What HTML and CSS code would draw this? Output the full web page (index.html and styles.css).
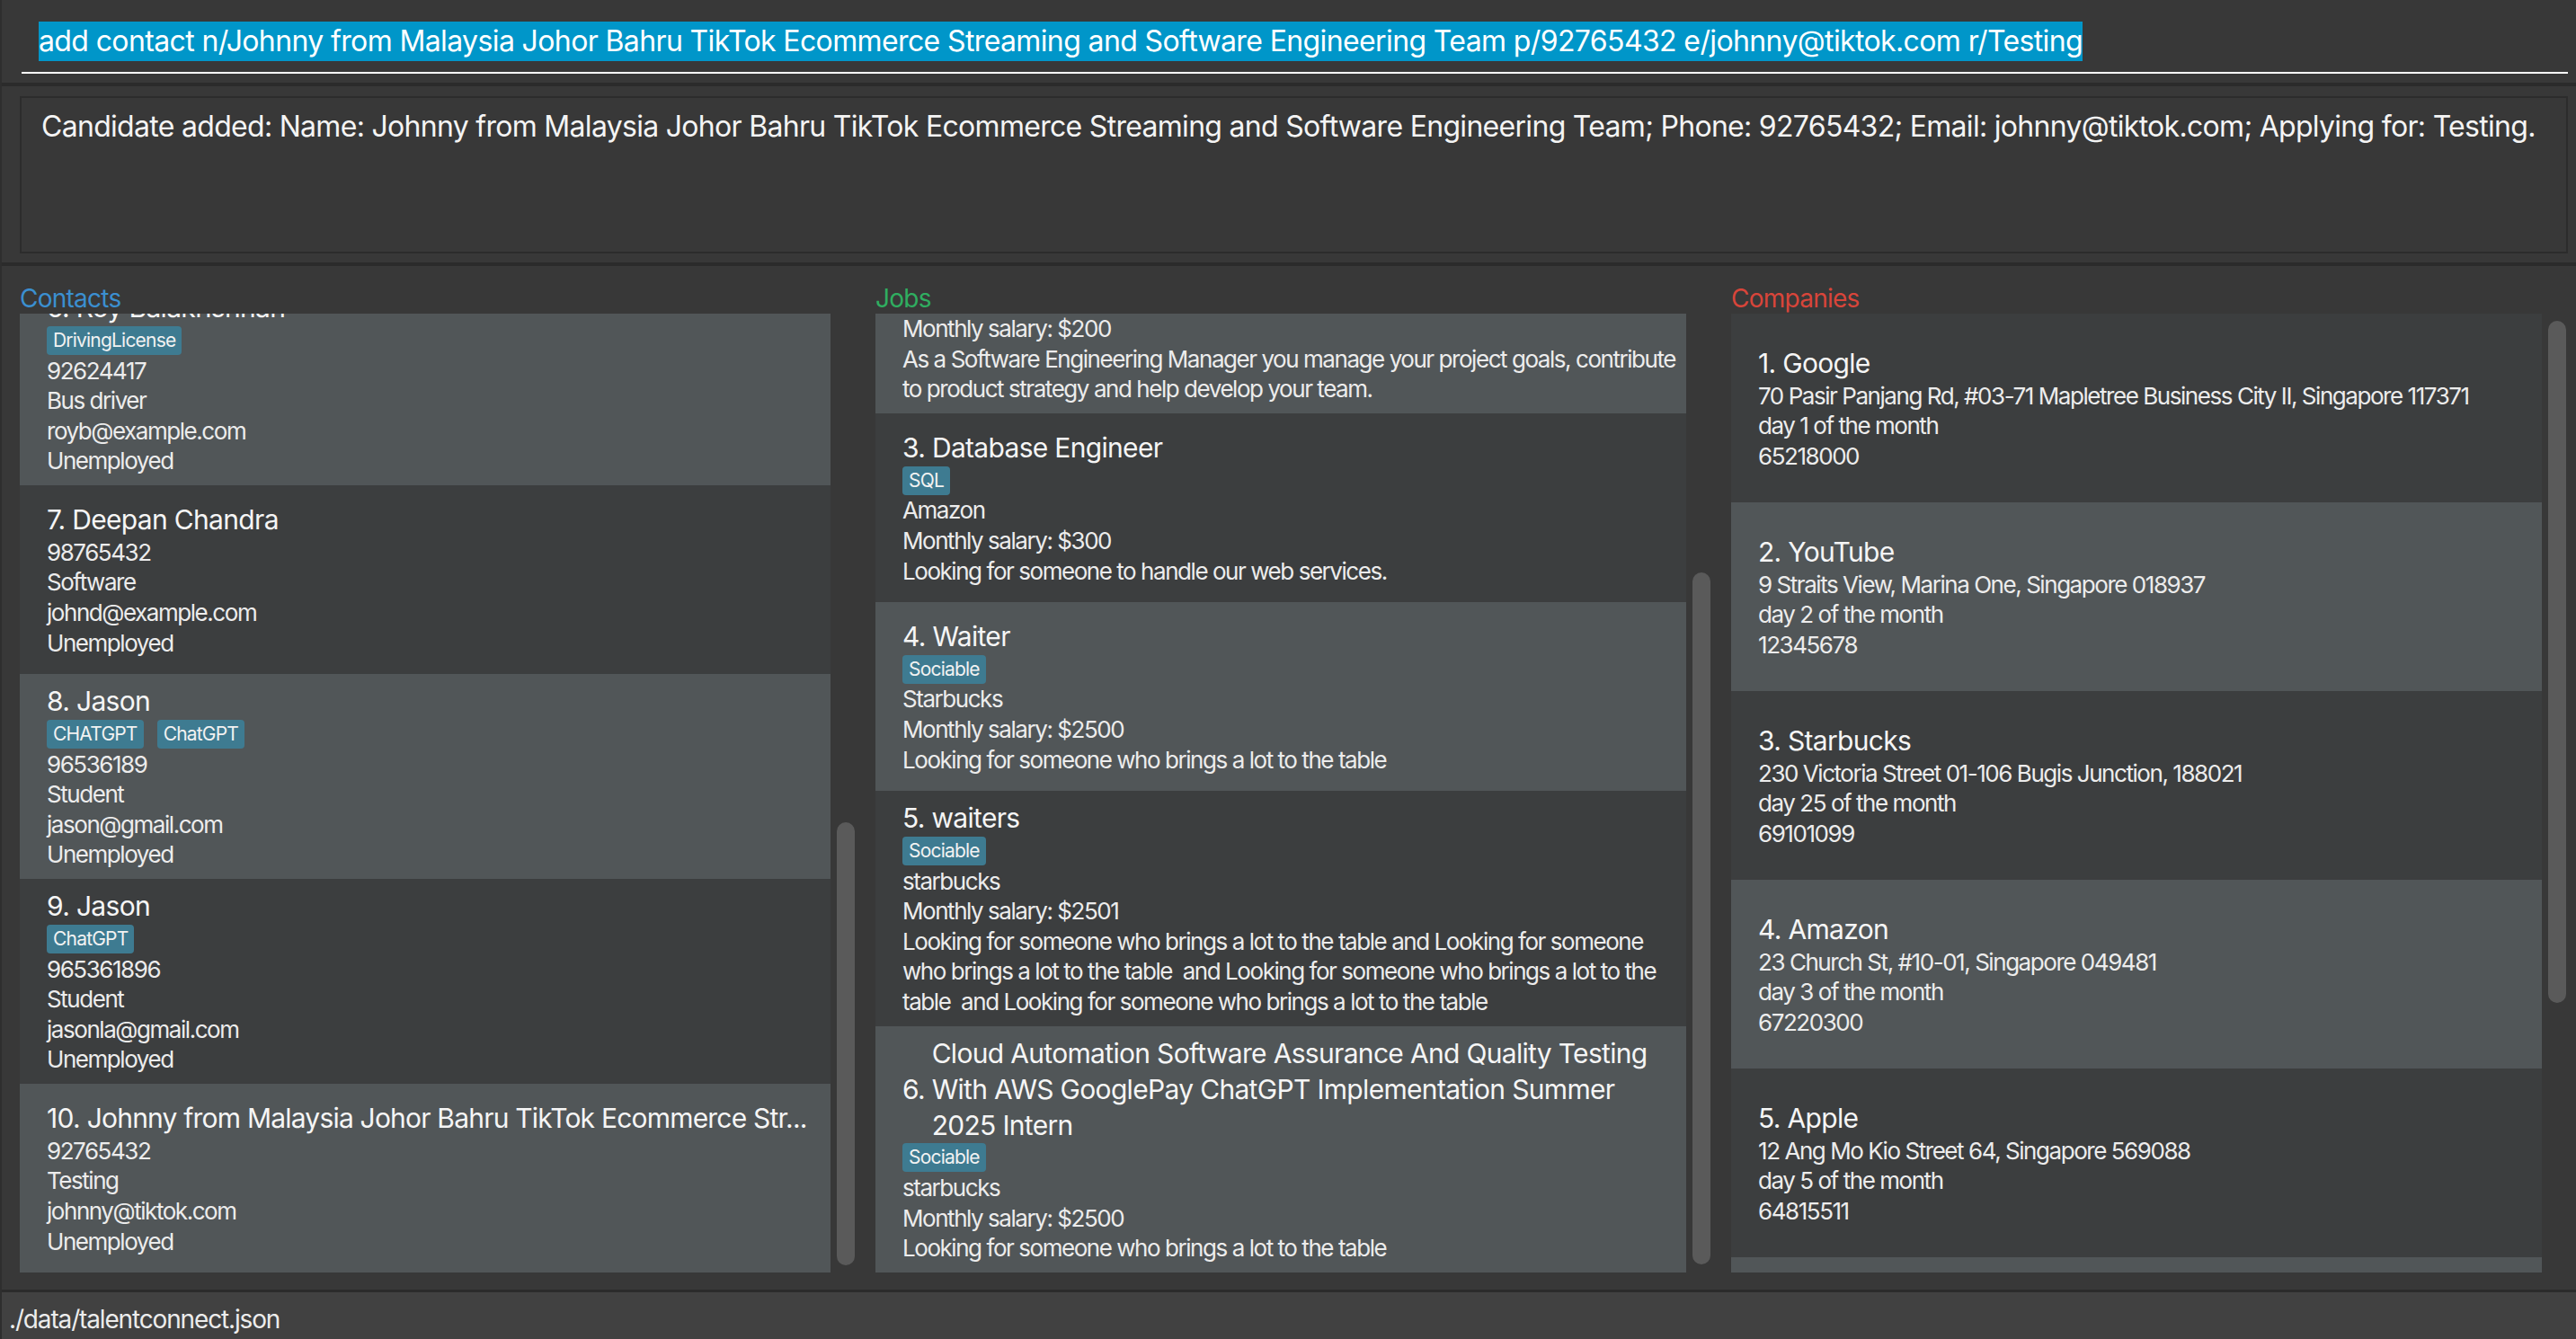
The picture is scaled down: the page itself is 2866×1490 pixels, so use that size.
FILE: index.html
```html
<!DOCTYPE html>
<html lang="en">
<head>
<meta charset="utf-8">
<title>TalentConnect</title>
<link rel="stylesheet" href="styles.css">
</head>
<body>
<div class="app">
  <div class="command-area">
    <div class="command-field"><span class="command-text">add contact n/Johnny from Malaysia Johor Bahru TikTok Ecommerce Streaming and Software Engineering Team p/92765432 e/johnny@tiktok.com r/Testing</span></div>
  </div>
  <div class="divider"></div>
  <div class="result-area">
    <div class="result-box">Candidate added: Name: Johnny from Malaysia Johor Bahru TikTok Ecommerce Streaming and Software Engineering Team; Phone: 92765432; Email: johnny@tiktok.com; Applying for: Testing.</div>
  </div>
  <div class="divider"></div>
  <div class="panels">
    <section class="panel">
      <div class="panel-title title-blue">Contacts</div>
      <div class="panel-body">
        <div class="list list-end">
          <div class="card light">
            <div class="card-name"><span class="idx">6.&nbsp;</span><span class="nm">Roy Balakrishnan</span></div>
            <div class="tags"><span class="tag">DrivingLicense</span></div>
            <div class="line">92624417</div>
            <div class="line">Bus driver</div>
            <div class="line">royb@example.com</div>
            <div class="line">Unemployed</div>
          </div>
          <div class="card">
            <div class="card-name"><span class="idx">7.&nbsp;</span><span class="nm">Deepan Chandra</span></div>
            <div class="line">98765432</div>
            <div class="line">Software</div>
            <div class="line">johnd@example.com</div>
            <div class="line">Unemployed</div>
          </div>
          <div class="card light">
            <div class="card-name"><span class="idx">8.&nbsp;</span><span class="nm">Jason</span></div>
            <div class="tags"><span class="tag">CHATGPT</span><span class="tag">ChatGPT</span></div>
            <div class="line">96536189</div>
            <div class="line">Student</div>
            <div class="line">jason@gmail.com</div>
            <div class="line">Unemployed</div>
          </div>
          <div class="card">
            <div class="card-name"><span class="idx">9.&nbsp;</span><span class="nm">Jason</span></div>
            <div class="tags"><span class="tag">ChatGPT</span></div>
            <div class="line">965361896</div>
            <div class="line">Student</div>
            <div class="line">jasonla@gmail.com</div>
            <div class="line">Unemployed</div>
          </div>
          <div class="card light">
            <div class="card-name"><span class="idx">10.&nbsp;</span><span class="nm nm-tight">Johnny from Malaysia Johor Bahru TikTok Ecommerce Str...</span></div>
            <div class="line">92765432</div>
            <div class="line">Testing</div>
            <div class="line">johnny@tiktok.com</div>
            <div class="line">Unemployed</div>
          </div>
        </div>
        <div class="scroll-track"><div class="thumb" style="margin-top:566px;height:493px"></div></div>
      </div>
    </section>
    <section class="panel">
      <div class="panel-title title-green">Jobs</div>
      <div class="panel-body">
        <div class="list list-end">
          <div class="card light">
            <div class="card-name"><span class="idx">2.&nbsp;</span><span class="nm">Software Engineering Manager</span></div>
            <div class="tags"><span class="tag">Leadership</span></div>
            <div class="line">Google</div>
            <div class="line">Monthly salary: $200</div>
            <div class="line">As a Software Engineering Manager you manage your project goals, contribute<br>to product strategy and help develop your team.</div>
          </div>
          <div class="card">
            <div class="card-name"><span class="idx">3.&nbsp;</span><span class="nm">Database Engineer</span></div>
            <div class="tags"><span class="tag">SQL</span></div>
            <div class="line">Amazon</div>
            <div class="line">Monthly salary: $300</div>
            <div class="line">Looking for someone to handle our web services.</div>
          </div>
          <div class="card light">
            <div class="card-name"><span class="idx">4.&nbsp;</span><span class="nm">Waiter</span></div>
            <div class="tags"><span class="tag">Sociable</span></div>
            <div class="line">Starbucks</div>
            <div class="line">Monthly salary: $2500</div>
            <div class="line">Looking for someone who brings a lot to the table</div>
          </div>
          <div class="card">
            <div class="card-name"><span class="idx">5.&nbsp;</span><span class="nm">waiters</span></div>
            <div class="tags"><span class="tag">Sociable</span></div>
            <div class="line">starbucks</div>
            <div class="line">Monthly salary: $2501</div>
            <div class="line">Looking for someone who brings a lot to the table and Looking for someone<br>who brings a lot to the table&nbsp; and Looking for someone who brings a lot to the<br>table&nbsp; and Looking for someone who brings a lot to the table</div>
          </div>
          <div class="card light">
            <div class="card-name"><span class="idx">6.&nbsp;</span><span class="nm">Cloud Automation Software Assurance And Quality Testing<br>With AWS GooglePay ChatGPT Implementation Summer<br>2025 Intern</span></div>
            <div class="tags"><span class="tag">Sociable</span></div>
            <div class="line">starbucks</div>
            <div class="line">Monthly salary: $2500</div>
            <div class="line">Looking for someone who brings a lot to the table</div>
          </div>
        </div>
        <div class="scroll-track"><div class="thumb" style="margin-top:288px;height:770px"></div></div>
      </div>
    </section>
    <section class="panel">
      <div class="panel-title title-red">Companies</div>
      <div class="panel-body">
        <div class="list">
          <div class="card">
            <div class="card-name"><span class="idx">1.&nbsp;</span><span class="nm">Google</span></div>
            <div class="line">70 Pasir Panjang Rd, #03-71 Mapletree Business City II, Singapore 117371</div>
            <div class="line">day 1 of the month</div>
            <div class="line">65218000</div>
          </div>
          <div class="card light">
            <div class="card-name"><span class="idx">2.&nbsp;</span><span class="nm">YouTube</span></div>
            <div class="line">9 Straits View, Marina One, Singapore 018937</div>
            <div class="line">day 2 of the month</div>
            <div class="line">12345678</div>
          </div>
          <div class="card">
            <div class="card-name"><span class="idx">3.&nbsp;</span><span class="nm">Starbucks</span></div>
            <div class="line">230 Victoria Street 01-106 Bugis Junction, 188021</div>
            <div class="line">day 25 of the month</div>
            <div class="line">69101099</div>
          </div>
          <div class="card light">
            <div class="card-name"><span class="idx">4.&nbsp;</span><span class="nm">Amazon</span></div>
            <div class="line">23 Church St, #10-01, Singapore 049481</div>
            <div class="line">day 3 of the month</div>
            <div class="line">67220300</div>
          </div>
          <div class="card">
            <div class="card-name"><span class="idx">5.&nbsp;</span><span class="nm">Apple</span></div>
            <div class="line">12 Ang Mo Kio Street 64, Singapore 569088</div>
            <div class="line">day 5 of the month</div>
            <div class="line">64815511</div>
          </div>
          <div class="card light">
            <div class="card-name"><span class="idx">6.&nbsp;</span><span class="nm">Microsoft</span></div>
            <div class="line">182 Cecil Street, Frasers Tower, Singapore 069547</div>
            <div class="line">day 7 of the month</div>
            <div class="line">68883388</div>
          </div>
        </div>
        <div class="scroll-track"><div class="thumb" style="margin-top:8px;height:759px"></div></div>
      </div>
    </section>
  </div>
  <div class="status-bar">./data/talentconnect.json</div>
</div>
</body>
</html>
```
FILE: styles.css
```css
html, body {
  margin: 0;
  padding: 0;
  background: #383838;
  overflow: hidden;
}

.app {
  height: 1490px;
  box-sizing: border-box;
  display: flex;
  flex-direction: column;
  background: #383838;
  border-left: 2px solid #2e2e2e;
  font-family: "Inter", "Noto Sans", sans-serif;
  color: #f2f2f2;
}

/* command box */
.command-area {
  padding: 24px 9px 10px 22px;
}

.command-field {
  display: flex;
  padding: 0 0 12px 19px;
  border-bottom: 2px solid #ffffff;
}

.command-text {
  display: block;
  height: 44px;
  font-size: 32px;
  line-height: 44px;
  letter-spacing: -0.62px;
  background: #0096c9;
  color: #ffffff;
  white-space: nowrap;
}

.divider {
  height: 4px;
  background: #2b2b2b;
  flex-shrink: 0;
}

/* result display */
.result-area {
  padding: 11px 9px 10px 20px;
}

.result-box {
  height: 175px;
  box-sizing: border-box;
  border: 2px solid #2c2c2c;
  padding: 10px 22px 8px;
  font-size: 32px;
  line-height: 44px;
  letter-spacing: -0.7px;
  color: #f4f4f4;
  white-space: nowrap;
}

/* panels */
.panels {
  flex: 1;
  min-height: 0;
  display: grid;
  grid-template-columns: 952px 952px 1fr;
  padding: 0 0 19px 20px;
}

.panel {
  display: flex;
  flex-direction: column;
  min-height: 0;
}

.panel-title {
  height: 53px;
  box-sizing: border-box;
  padding-top: 20px;
  font-size: 28px;
  line-height: 33px;
  letter-spacing: -0.75px;
}

.title-blue { color: #3b8fd0; }
.title-green { color: #2fae60; }
.title-red { color: #d8453a; }

.panel-body {
  flex: 1;
  min-height: 0;
  display: flex;
  gap: 7px;
}

.list {
  width: 902px;
  flex-shrink: 0;
  display: flex;
  flex-direction: column;
  overflow: hidden;
}

.list-end {
  justify-content: flex-end;
}

.scroll-track {
  width: 20px;
  flex-shrink: 0;
}

.thumb {
  width: 20px;
  border-radius: 10px;
  background: #5a5a5a;
}

/* cards */
.card {
  flex-shrink: 0;
  box-sizing: border-box;
  min-height: 210px;
  padding: 10px 20px 10px 30px;
  display: flex;
  flex-direction: column;
  justify-content: center;
  background: #3c3e3f;
}

.card.light {
  background: #515658;
}

.card-name {
  display: flex;
  align-items: center;
  font-size: 30px;
  line-height: 40px;
  letter-spacing: -0.68px;
  color: #f5f5f5;
}

.idx {
  flex-shrink: 0;
  white-space: nowrap;
}

.nm {
  white-space: nowrap;
  min-width: 0;
}

.nm-tight {
  letter-spacing: -0.8px;
}

.line {
  font-size: 26px;
  line-height: 33.6px;
  letter-spacing: -1.45px;
  white-space: nowrap;
  color: #ececec;
}

.tags {
  height: 33.6px;
  display: flex;
  align-items: center;
  gap: 15px;
}

.tag {
  height: 32px;
  line-height: 32px;
  padding: 0 7px;
  border-radius: 4px;
  background: #3e7b91;
  font-size: 21px;
  letter-spacing: -0.8px;
  color: #f2f2f2;
}

/* status bar */
.status-bar {
  height: 55px;
  flex-shrink: 0;
  box-sizing: border-box;
  border-top: 3px solid #2b2b2b;
  background: #414141;
  padding: 8px 0 0 8px;
  font-size: 28px;
  line-height: 44px;
  letter-spacing: -1.15px;
  color: #ececec;
}
```
